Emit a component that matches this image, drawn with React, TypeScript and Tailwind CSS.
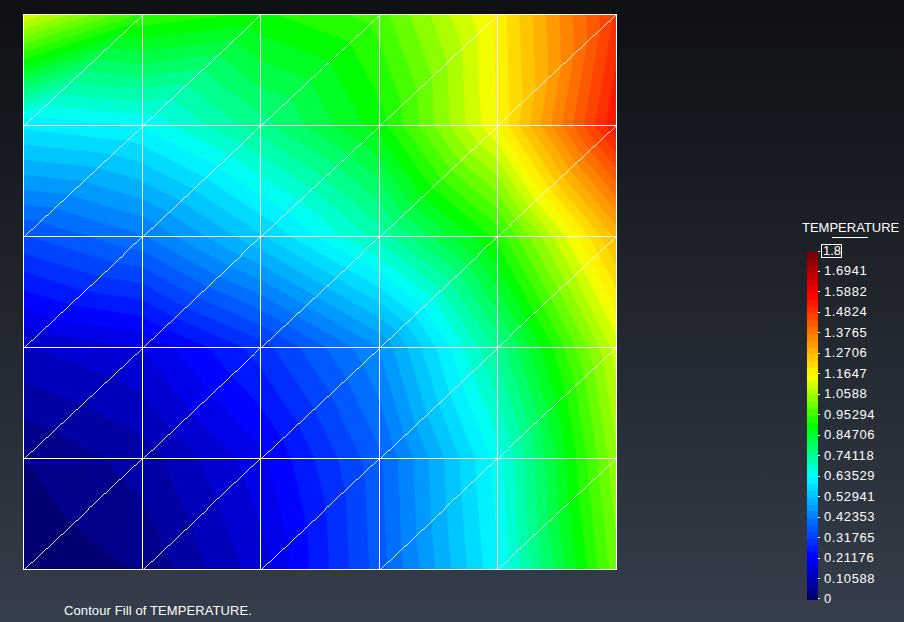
import React from "react";

type V = { x: number; y: number; v: number };

const XS = [0, 119, 237, 356, 474, 593];
const YS = [0, 111, 222, 333, 444, 555];
const VALUES = [
  [1.13, 0.95, 0.91, 0.97, 1.175, 1.49],
  [0.61, 0.64, 0.76, 0.9, 1.165, 1.55],
  [0.35, 0.42, 0.56, 0.72, 0.93, 1.28],
  [0.138, 0.18, 0.3, 0.46, 0.75, 1.11],
  [0.035, 0.087, 0.2, 0.38, 0.65, 1.05],
  [0.0, 0.04, 0.16, 0.37, 0.63, 1.01],
];
const BANDS = 51;
const MAX = 1.8;
const STOPS: [number, number[]][] = [
  [0, [0, 0, 115]],
  [6, [0, 0, 255]],
  [18, [0, 255, 255]],
  [25.5, [0, 255, 0]],
  [33, [255, 255, 0]],
  [45, [255, 0, 0]],
  [51, [125, 0, 0]],
];

function bandColor(i: number): string {
  const t = (i / (BANDS - 1)) * BANDS;
  for (let s = 0; s < STOPS.length - 1; s++) {
    const [a, ca] = STOPS[s];
    const [b, cb] = STOPS[s + 1];
    if (t <= b) {
      const f = (t - a) / (b - a);
      const c = ca.map((x, k) => Math.round(x + (cb[k] - x) * f));
      return `rgb(${c[0]},${c[1]},${c[2]})`;
    }
  }
  return "rgb(125,0,0)";
}

function clip(poly: V[], level: number, above: boolean): V[] {
  const out: V[] = [];
  const inside = (p: V) => (above ? p.v >= level : p.v <= level);
  for (let i = 0; i < poly.length; i++) {
    const p = poly[i];
    const q = poly[(i + 1) % poly.length];
    if (inside(p)) out.push(p);
    if (inside(p) !== inside(q)) {
      const f = (level - p.v) / (q.v - p.v);
      out.push({ x: p.x + (q.x - p.x) * f, y: p.y + (q.y - p.y) * f, v: level });
    }
  }
  return out;
}

function contourPolys() {
  const res: { pts: string; fill: string }[] = [];
  const node = (r: number, c: number): V => ({ x: XS[c], y: YS[r], v: VALUES[r][c] });
  for (let r = 0; r < 5; r++) {
    for (let c = 0; c < 5; c++) {
      const tris: V[][] = [
        [node(r, c), node(r, c + 1), node(r + 1, c)],
        [node(r, c + 1), node(r + 1, c + 1), node(r + 1, c)],
      ];
      for (const tri of tris) {
        for (let i = 0; i < BANDS; i++) {
          const lo = (i * MAX) / BANDS;
          const hi = ((i + 1) * MAX) / BANDS;
          const p = clip(clip(tri, lo, true), hi, false);
          if (p.length >= 3) {
            res.push({
              pts: p.map((o) => `${o.x.toFixed(2)},${o.y.toFixed(2)}`).join(" "),
              fill: bandColor(i),
            });
          }
        }
      }
    }
  }
  return res;
}

const LABELS = [
  "1.8", "1.6941", "1.5882", "1.4824", "1.3765", "1.2706", "1.1647", "1.0588", "0.95294",
  "0.84706", "0.74118", "0.63529", "0.52941", "0.42353", "0.31765", "0.21176", "0.10588", "0",
];

export default function App() {
  const polys = contourPolys();
  const bands = Array.from({ length: BANDS }, (_, i) => BANDS - 1 - i);
  const font = { fontFamily: "'Liberation Sans', Arial, sans-serif" };
  return (
    <div
      className="flex h-[622px] w-[904px] overflow-hidden bg-gradient-to-b from-[#0e1014] to-[#353e4b] text-white"
      style={font}
    >
      <div className="ml-[23px] mt-[14px] flex w-[594px] flex-col">
        <svg width={594} height={556} className="block shrink-0" shapeRendering="crispEdges">
          <rect x={0} y={0} width={594} height={556} fill="#0000ff" />
          {polys.map((p, i) => (
            <polygon key={i} points={p.pts} fill={p.fill} stroke={p.fill} strokeWidth={0.3} />
          ))}
          {YS.slice(1).map((y, r) =>
            XS.slice(0, 5).map((x, c) => (
              <line
                key={`${r}-${c}`}
                x1={x + 0.5}
                y1={y + 0.5}
                x2={XS[c + 1] + 0.5}
                y2={YS[r] + 0.5}
                stroke="#fff"
                strokeWidth={0.85}
              />
            ))
          )}
          {XS.map((x) => (
            <line key={x} x1={x + 0.5} x2={x + 0.5} y1={0} y2={556} stroke="#fff" />
          ))}
          {YS.map((y) => (
            <line key={y} x1={0} x2={594} y1={y + 0.5} y2={y + 0.5} stroke="#fff" />
          ))}
        </svg>
        <div className="ml-[41px] mt-[34px] text-[13px] leading-[14px] tracking-[0.1px]">Contour Fill of TEMPERATURE.</div>
      </div>

      <div className="ml-[185px] mt-[220px] flex w-[100px] flex-col">
        <div className="text-[13px] leading-[15px] whitespace-nowrap">TEMPERATURE</div>
        <div className="ml-[30px] mt-[2px] h-px w-[36px] bg-white" />
        <div className="relative mt-[14px] ml-[5px] flex h-[348px]">
          <div className="flex h-full w-[11px] flex-col">
            {bands.map((i) => (
              <div key={i} className="flex-1" style={{ backgroundColor: bandColor(i) }} />
            ))}
          </div>
          <div className="absolute left-[11px] top-[-8px] flex h-[362px] flex-col justify-between">
            {LABELS.map((l, i) => (
              <div key={l} className="flex h-[14px] items-center text-[13px] leading-[14px] tracking-[0.6px]">
                <div className="h-px w-[2px] bg-white" />
                <div
                  className={
                    i === 0
                      ? "ml-[1px] h-[14px] w-[21px] overflow-hidden border border-white pl-[1px] leading-[12px] tracking-normal"
                      : "ml-[4px]"
                  }
                >
                  {l}
                </div>
              </div>
            ))}
          </div>
        </div>
      </div>
    </div>
  );
}
